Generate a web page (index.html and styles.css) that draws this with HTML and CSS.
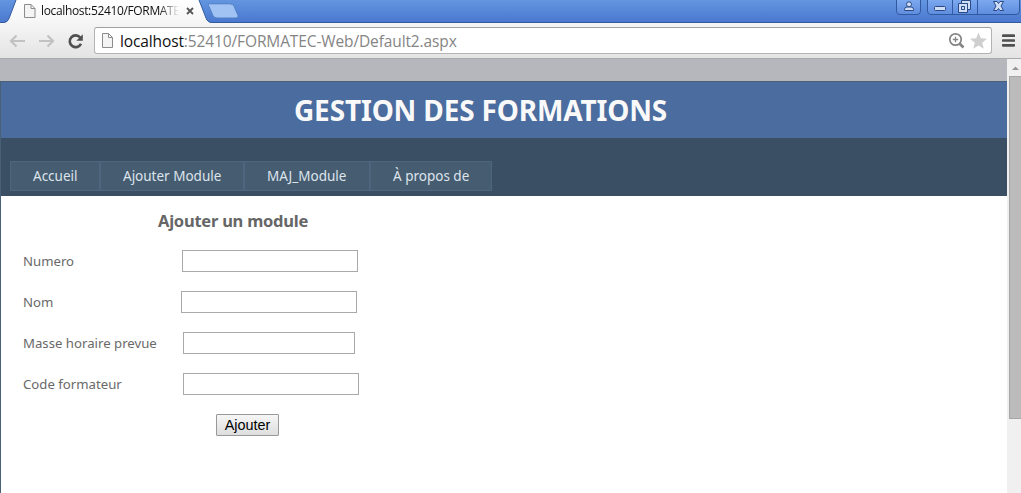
FILE: index.html
```html
<!DOCTYPE html>
<html lang="fr">
<head>
<meta charset="utf-8">
<title>Gestion des formations</title>
<link rel="stylesheet" href="styles.css">
</head>
<body>
<div class="browser">
  <div class="tabstrip">
    <svg class="frame" width="1021" height="24" viewBox="0 0 1021 24">
      <defs>
        <linearGradient id="tab" x1="0" y1="0" x2="0" y2="1"><stop offset="0" stop-color="#fff"/><stop offset="1" stop-color="#f5f5f5"/></linearGradient>
        <linearGradient id="glass" x1="0" y1="0" x2="0" y2="1"><stop offset="0" stop-color="#7eaaf0"/><stop offset="1" stop-color="#5e8cdd"/></linearGradient>
      </defs>
      <path d="M0 24V22.700H4Q7.500 22.500 9 18.500L16 0H199L206 18Q207.500 22.700 212 22.700H1021V24Z" fill="url(#tab)"/>
      <path d="M0 22.500H4Q7.500 22.300 9 18.500L16 0M199 0L206 18Q207.500 22.500 212 22.500H1021" fill="none" stroke="#335b9f"/>
      <path d="M209.500 3.800H230Q233.200 3.800 234.200 6.500L238 15.500Q238.700 18 236 18H217Q214 18 213 15.500L208.500 5.500Q208 3.800 209.500 3.800Z" fill="#a1c3f4" stroke="#517fc7"/>
      <g stroke="#3159a0" fill="url(#glass)">
        <path d="M896.500 -1V11Q896.500 14.500 900 14.500H917Q920.500 14.500 920.500 11V-1"/>
        <path d="M927.500 -1V11Q927.500 14.500 931 14.500H1016Q1019.500 14.500 1019.500 11V-1M952.500 0V14M977.500 0V14"/>
      </g>
      <g stroke="#294985" fill="#cfdef6">
        <path d="M904.500 10.500V9.500Q904.500 7 907 7H911Q913.500 7 913.500 9.500V10.500Z"/><circle cx="909" cy="4.300" r="2.500"/>
        <rect x="934.500" y="6.500" width="11" height="4" rx="1"/>
        <path fill-rule="evenodd" d="M961.500 .5H970.500V9.500H961.500ZM964.500 3.500V6.500H967.500V3.500Z"/>
        <path fill-rule="evenodd" d="M958.500 3.500H967.500V12.500H958.500ZM961.500 6.500V9.500H964.500V6.500Z"/>
        <path d="M993.500 1.500H997L998.500 3.500L1000 1.500H1003.500L1001 6L1003.500 10.500H1000L998.500 8.500L997 10.500H993.500L996 6Z"/>
      </g>
    </svg>
    <div class="tab">
      <svg width="12" height="14" viewBox="0 0 12 14"><path d="M.5 .5H7L11 4.500V13.500H.5ZM7 .5V4.500H11" fill="#f4f4f4" stroke="#8c8c8c"/></svg>
      <span class="tab-title">localhost:52410/FORMATE</span>
      <svg class="close" width="8" height="8" viewBox="0 0 8 8"><path d="M1 1L7 7M7 1L1 7" stroke="#555" stroke-width="1.800"/></svg>
    </div>
  </div>

  <div class="toolbar">
    <svg width="80" height="18" viewBox="0 0 80 18">
      <path d="M20 9H6.500M11.500 3.500L6 9L11.500 14.500M34 9H47.500M42.500 3.500L48 9L42.500 14.500" fill="none" stroke="#c2c2c2" stroke-width="2.200"/>
      <path d="M75.200 5.500A5.900 5.900 0 1 0 76 11.700" fill="none" stroke="#505050" stroke-width="2.600"/><path d="M77.800 2.300V8.700H71.300Z" fill="#505050"/>
    </svg>
    <div class="omnibox">
      <svg width="11" height="15" viewBox="0 0 11 15"><path d="M.5 .5H6.500L10.500 4.500V14.500H.5ZM6.500 .5V4.500H10.500" fill="#f4f4f4" stroke="#8c8c8c"/></svg>
      <span class="url"><b>localhost</b>:52410/FORMATEC-Web/Default2.aspx</span>
      <svg class="tools" width="40" height="18" viewBox="0 0 40 18">
        <circle cx="7.500" cy="7.500" r="5.700" fill="none" stroke="#858585" stroke-width="1.700"/><path d="M11.500 11.500L15.500 15.500" stroke="#858585" stroke-width="2.600"/><path d="M4.800 7.500H10.200M7.500 4.800V10.200" stroke="#858585" stroke-width="1.300"/>
        <path d="M30.500 .5L32.800 6.300L39 6.700L34.200 10.700L35.800 16.800L30.500 13.400L25.200 16.800L26.800 10.700L22 6.700L28.200 6.300Z" fill="#cfcfcf"/>
      </svg>
    </div>
    <svg class="burger" width="13" height="13" viewBox="0 0 13 13"><path d="M1 1.700H12M1 6.500H12M1 11.300H12" stroke="#505050" stroke-width="2.700" stroke-linecap="round"/></svg>
  </div>

  <div class="viewport">
    <div class="page">
      <header class="header"><h1>GESTION DES FORMATIONS</h1></header>
      <nav class="nav">
        <a class="item home"><span>Accueil</span></a>
        <a class="item add"><span>Ajouter Module</span></a>
        <a class="item update"><span>MAJ_Module</span></a>
        <a class="item about"><span>À propos de</span></a>
      </nav>
      <main class="main">
        <h2><span>Ajouter un module</span></h2>
        <div class="row"><label>Numero</label><input class="f-num"></div>
        <div class="row"><label>Nom</label><input class="f-nom"></div>
        <div class="row"><label>Masse horaire prevue</label><input class="f-masse"></div>
        <div class="row"><label>Code formateur</label><input class="f-code"></div>
        <button class="submit">Ajouter</button>
      </main>
    </div>
    <div class="scrollbar">
      <svg width="14" height="17" viewBox="0 0 14 17"><path d="M5 11L8.500 7.500L12 11Z" fill="#969696"/></svg>
      <div class="thumb"></div>
    </div>
  </div>
</div>
</body>
</html>
```
FILE: styles.css
```css
* { box-sizing: border-box; }
body { margin: 0; overflow: hidden; font-family: "Noto Sans", "Open Sans", sans-serif; }
svg { display: block; flex: none; }
.browser { width: 1021px; height: 493px; display: flex; flex-direction: column; overflow: hidden; }

.tabstrip { position: relative; height: 24px; flex: none; background: linear-gradient(#6395e0, #4876cd); }
.frame { position: absolute; inset: 0; }
.tab { position: relative; display: flex; align-items: center; height: 22px; padding-left: 24px; }
.tab-title {
  width: 138px; margin-left: 5px; white-space: nowrap;
  font-family: "Open Sans", sans-serif; font-size: 12px; line-height: 20px; letter-spacing: -0.35px; color: #111;
  -webkit-mask-image: linear-gradient(90deg, #000 118px, transparent);
  mask-image: linear-gradient(90deg, #000 118px, transparent);
}
.close { margin-left: 7px; }

.toolbar {
  display: flex; align-items: center; height: 35px; flex: none; padding: 0 6px 1px 5px;
  background: linear-gradient(#f5f5f5, #e4e4e4); border-bottom: 1px solid #a9aaac;
}
.omnibox {
  display: flex; align-items: center; width: 898px; height: 27px; margin-left: 9px; padding: 0 3px 0 7px;
  background: #fff; border: 1px solid #b3b3b3; border-top-color: #a0a0a0; border-radius: 3px;
}
.url { margin-left: 7px; white-space: nowrap; font-family: "Open Sans", sans-serif; font-size: 15.5px; line-height: 22px; letter-spacing: -0.12px; color: #858585; }
.url b { font-weight: 400; color: #111; }
.tools { margin-left: auto; }
.burger { margin-left: 10px; }

.viewport { display: flex; flex: 1; min-height: 0; }
.page { width: 1007px; padding-top: 22px; background: #b6b7bc; display: flex; flex-direction: column; }
.header { height: 57px; flex: none; background: #4b6c9e; border: 1px solid #496077; border-width: 1px 0 0 1px; padding: 7px 0 0 293px; }
.header h1 { margin: 0; font-size: 28px; line-height: 43px; font-weight: 700; letter-spacing: -0.16px; color: #f9f9f9; white-space: nowrap; }
.nav { height: 58px; flex: none; display: flex; padding: 23px 0 0 9px; background: #3a4f63; border-left: 1px solid #496077; }
.item {
  height: 30px; padding-left: 22px; white-space: nowrap;
  background: #465c71; border: 1px solid #4e667d; color: #dde4ec; font-size: 13.5px; line-height: 28px;
}
.home { width: 90px; }
.add { width: 144px; }
.update { width: 126px; }
.about { width: 122px; }

.main { flex: 1; background: #fff; border-left: 1px solid #496077; color: #696969; padding: 12px 0 0 22px; }
.main h2 { margin: 0 0 13px 135px; font-size: 16.5px; line-height: 26px; font-weight: 700; letter-spacing: -0.24px; color: #666; white-space: nowrap; }
.row { display: flex; align-items: center; height: 28px; margin-bottom: 13px; }
.row label { white-space: nowrap; font-size: 13.2px; line-height: 22px; }
.row input { height: 22px; padding: 0; border: 1px solid #a9a9a9; background: #fff; margin-left: auto; }
.row .f-num { width: 176px; margin-right: 649px; }
.row .f-nom { width: 176px; margin-right: 650px; }
.row .f-masse { width: 172px; margin-right: 652px; }
.row .f-code { width: 176px; margin-right: 648px; }
.submit {
  display: block; width: 63px; height: 22px; margin: 16px 0 0 193px; padding: 0;
  border: 1px solid #999; border-radius: 1px; background: linear-gradient(#f6f6f6, #dedede);
  font-family: "Liberation Sans", Arial, sans-serif; font-size: 14.4px; line-height: 20px; color: #000;
}

.scrollbar { width: 14px; background: #f0f0f0; }
.thumb { height: 343px; margin-left: 2px; background: #bbb; border: 1px solid #a6a6a6; border-right: 0; }
```
